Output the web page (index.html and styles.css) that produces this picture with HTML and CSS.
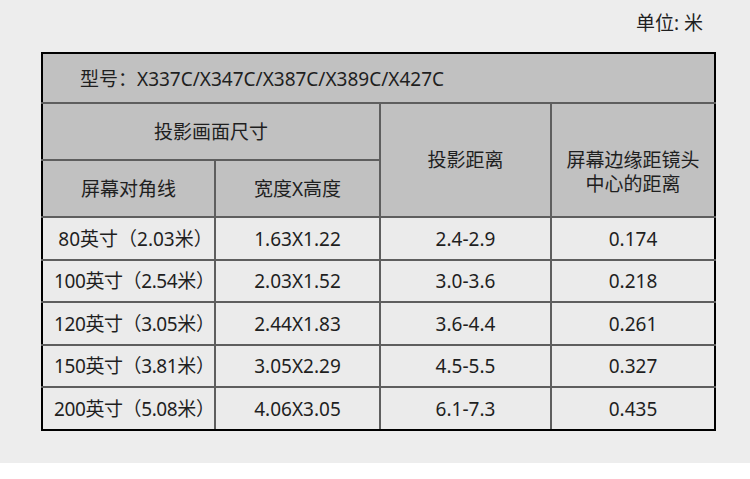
FILE: index.html
```html
<!DOCTYPE html>
<html lang="zh-CN">
<head>
<meta charset="utf-8">
<title>投影尺寸表</title>
<link rel="stylesheet" href="styles.css">
</head>
<body>
<div class="page">
  <div class="unit">单位: 米</div>
  <table class="spec">
    <colgroup>
      <col class="c1"><col class="c2"><col class="c3"><col class="c4">
    </colgroup>
    <thead>
      <tr class="model-row">
        <th colspan="4" class="model">型号：X337C/X347C/X387C/X389C/X427C</th>
      </tr>
      <tr class="head-row">
        <th colspan="2">投影画面尺寸</th>
        <th rowspan="2">投影距离</th>
        <th rowspan="2" class="edge"><span>屏幕边缘距镜头<br>中心的距离</span></th>
      </tr>
      <tr class="head-row">
        <th>屏幕对角线</th>
        <th>宽度X高度</th>
      </tr>
    </thead>
    <tbody>
      <tr class="r-a"><td class="size">80英寸（2.03米）</td><td>1.63X1.22</td><td>2.4-2.9</td><td>0.174</td></tr>
      <tr class="r-b"><td class="size tight">100英寸（2.54米）</td><td>2.03X1.52</td><td>3.0-3.6</td><td>0.218</td></tr>
      <tr class="r-a"><td class="size tight">120英寸（3.05米）</td><td>2.44X1.83</td><td>3.6-4.4</td><td>0.261</td></tr>
      <tr class="r-b"><td class="size tight">150英寸（3.81米）</td><td>3.05X2.29</td><td>4.5-5.5</td><td>0.327</td></tr>
      <tr class="r-a"><td class="size tight">200英寸（5.08米）</td><td>4.06X3.05</td><td>6.1-7.3</td><td>0.435</td></tr>
    </tbody>
  </table>
</div>
<div class="foot"></div>
</body>
</html>
```

FILE: styles.css
```css
html, body {
  margin: 0;
  padding: 0;
  background: #ffffff;
}
body {
  font-family: "Noto Sans", "Noto Sans CJK SC", sans-serif;
  color: #1f1f1f;
  width: 750px;
  height: 479px;
  overflow: hidden;
}
.page {
  height: 463px;
  background: #ededed;
  padding: 10px 0 0 41px;
  box-sizing: border-box;
}
.unit {
  font-size: 19px;
  line-height: 27px;
  height: 42px;
  text-align: right;
  padding-right: 47px;
}
.spec {
  border-collapse: collapse;
  table-layout: fixed;
  width: 673px;
  border: 2px solid #000;
  font-size: 19px;
}
.c1 { width: 173px; }
.c2 { width: 165px; }
.c3 { width: 171px; }
.c4 { width: 164px; }
.spec th, .spec td {
  border: 2px solid #5e5e5e;
  padding: 0;
  text-align: center;
  vertical-align: middle;
  font-weight: normal;
  line-height: 24px;
}
.spec th {
  background: #c1c1c1;
}
.spec td {
  background: #ebebeb;
}
.spec td.size {
  padding-left: 14px;
}
.spec td.tight {
  letter-spacing: -0.4px;
  padding-left: 11px;
}
.model-row { height: 50px; }
.spec th.model {
  text-align: left;
  padding-left: 37px;
  padding-top: 2px;
  border-top: 2px solid #000;
}
.head-row { height: 57px; }
.spec th.edge {
  vertical-align: top;
  padding-top: 44px;
}
.r-a { height: 43px; }
.r-b { height: 42px; }
.spec tr > :first-child { border-left: 2px solid #000; }
.spec tr > :last-child { border-right: 2px solid #000; }
.spec tbody tr:last-child td { border-bottom: 2px solid #000; }
.head-row th.edge { border-right: 2px solid #000; }
.foot {
  height: 16px;
  background: #ffffff;
}
```
